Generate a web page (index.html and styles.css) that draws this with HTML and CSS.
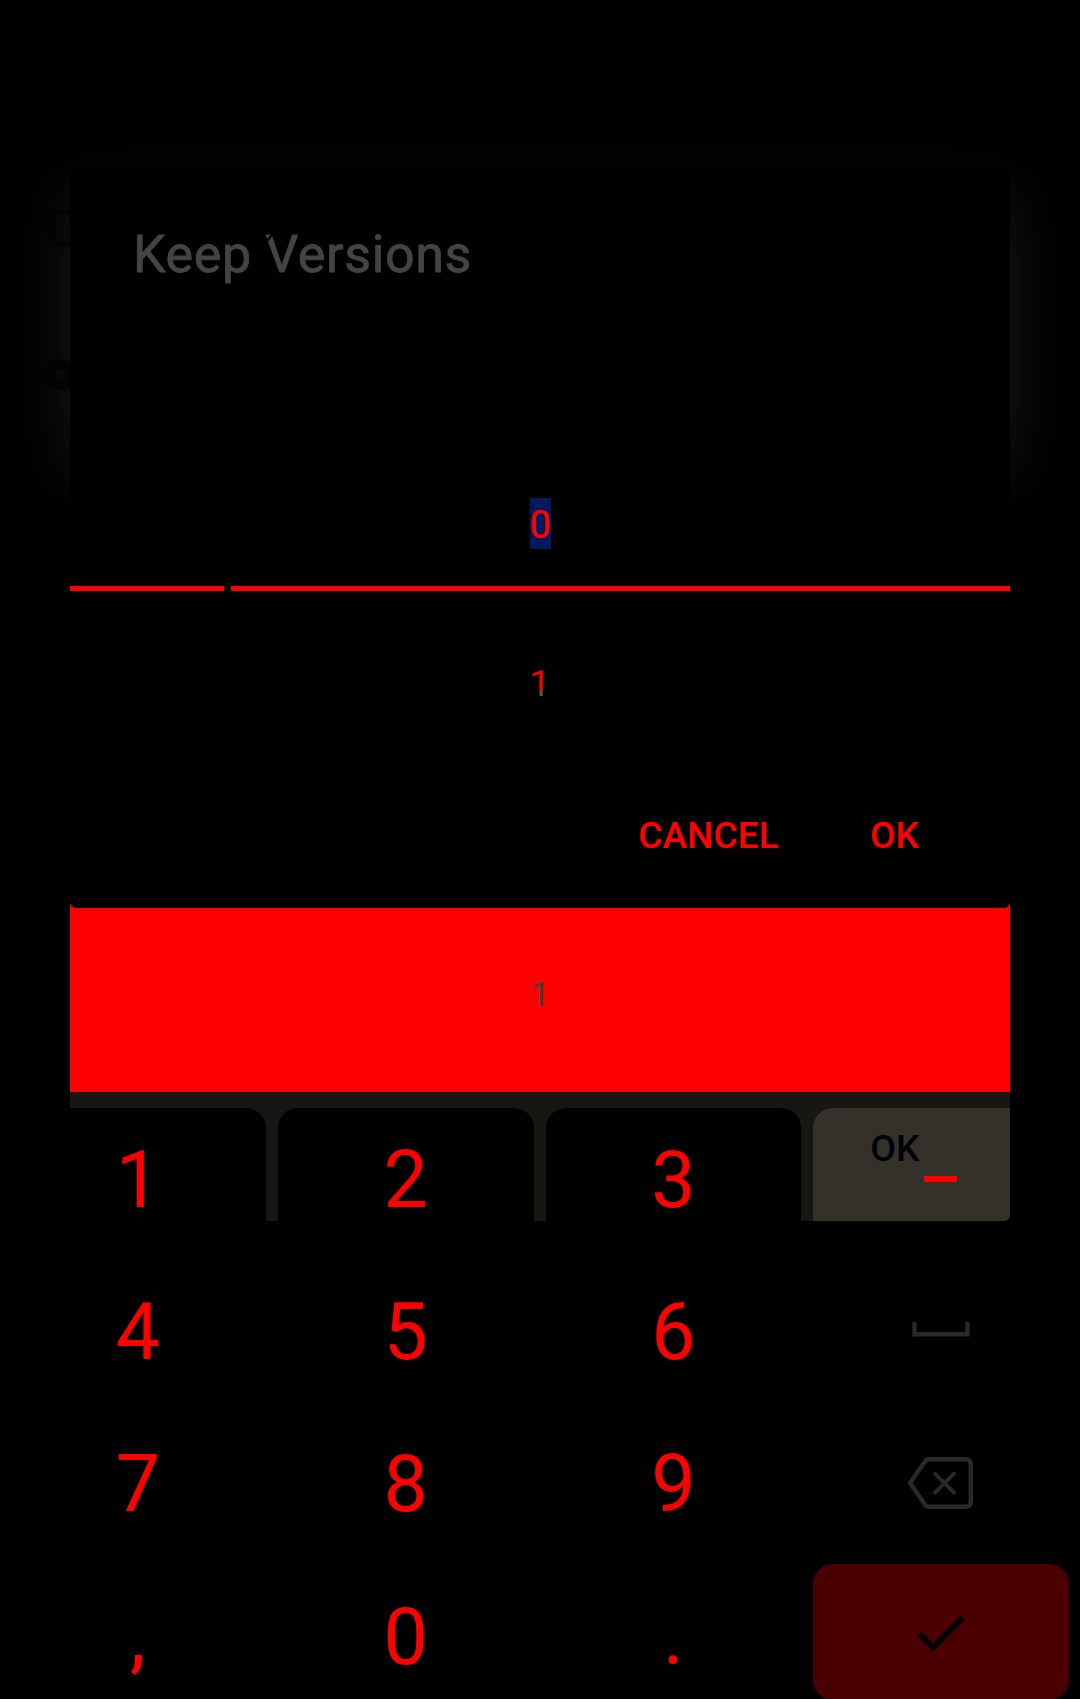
FILE: index.html
```html
<!DOCTYPE html>
<html lang="en">
<head>
<meta charset="utf-8">
<title>Keep Versions</title>
<link rel="stylesheet" href="styles.css">
</head>
<body>
<div class="screen">
  <div class="glow"></div>
  <svg class="backdrop-icons" width="25" height="200" viewBox="0 0 25 200" fill="none">
    <rect x="8" y="12" width="34" height="32" rx="3" stroke="#030303" stroke-width="5"/>
    <circle cx="15" cy="175" r="10.5" stroke="#030303" stroke-width="10"/>
  </svg>
  <main class="dialog">
    <h1 class="title">Keep Versions
      <svg class="title-nick" width="120" height="12" viewBox="0 0 120 12">
        <path d="M2.5 10 9.5 1M0 5l4 4" stroke="#000" stroke-width="2.2"/>
        <path d="M111 10l6-2v4h-6z" fill="#000"/>
      </svg>
    </h1>
    <div class="picker">
      <span class="value selected">0</span>
      <div class="line"><i class="line-left"></i><i class="line-right"></i></div>
      <span class="value next">1</span>
    </div>
    <div class="actions"><button class="action">CANCEL</button><button class="action">OK</button></div>
  </main>
  <div class="band"><span class="band-value">1</span></div>
  <section class="keypad">
    <div class="row row-first">
      <div class="key">1</div><div class="key">2</div><div class="key">3</div>
      <div class="key key-side"><span class="ghost">OK</span><i class="minus"></i></div>
    </div>
    <div class="row">
      <div class="key">4</div><div class="key">5</div><div class="key">6</div>
      <div class="key key-icon"><svg width="80" height="80" viewBox="0 0 80 80" fill="none" stroke="#292926" stroke-width="4.4" stroke-linecap="round"><path d="M13.5 35.8V46.3H66.5V35.8"/></svg></div>
    </div>
    <div class="row">
      <div class="key">7</div><div class="key">8</div><div class="key">9</div>
      <div class="key key-icon"><svg width="80" height="80" viewBox="0 0 80 80" fill="none" stroke="#292926" stroke-width="4.4" stroke-linecap="round" stroke-linejoin="round"><path d="M28 19.2H64.5Q69.8 19.2 69.8 24.5V61.5Q69.8 66.8 64.5 66.8H28Q25.5 66.8 24 64.5L9 43 24 21.5Q25.5 19.2 28 19.2Z"/><path d="M34 33.7l19 19M53 33.7l-19 19" stroke-width="3.8"/></svg></div>
    </div>
    <div class="row row-last">
      <div class="key">,</div><div class="key">0</div><div class="key">.</div>
      <div class="key key-icon key-enter"><svg width="80" height="80" viewBox="0 0 80 80" fill="none" stroke="#000" stroke-width="5.8"><path d="M18.4 41.8 32 55.4 61.8 25.6"/></svg></div>
    </div>
  </section>
</div>
</body>
</html>
```
FILE: styles.css
```css
* { box-sizing: border-box; }
body { margin: 0; background: #000; font-family: Roboto, sans-serif; }
.screen { position: relative; width: 1080px; height: 1699px; overflow: hidden; background: #000; color: #f00; }

/* faint halo around the dialog */
.glow { position: absolute; left: 70px; top: 192px; width: 940px; height: 280px; border-radius: 6px; box-shadow: 0 0 60px 3px #161616; }
.backdrop-icons { position: absolute; left: 45px; top: 200px; }

.dialog { position: relative; width: 940px; height: 740px; margin: 168px auto 0; background: #000; border-radius: 6px; display: flex; flex-direction: column; z-index: 1; }
.title { position: relative; margin: 56px 0 0 63px; height: 62px; line-height: 62px; font-size: 52px; font-weight: 400; letter-spacing: .6px; color: #444; -webkit-text-stroke: .8px #444; white-space: nowrap; }
.title-nick { position: absolute; left: 130px; top: 9px; }
.picker { display: flex; flex-direction: column; align-items: center; margin-top: 44px; padding-top: 168px; }
.value { font-size: 38px; line-height: 51px; width: 21px; text-align: center; }
.selected { height: 51px; line-height: 55px; background: #001a60; -webkit-text-stroke: .5px #f00; }
.line { display: flex; gap: 7px; width: 100%; height: 5px; margin-top: 37px; }
.line-left { width: 154px; background: #f00; }
.line-right { flex: 1; background: #f00; }
.next { margin-top: 67px; font-size: 36.5px; background: linear-gradient(#f00 32px, #555 32px); -webkit-background-clip: text; background-clip: text; color: transparent; }
.actions { display: flex; justify-content: flex-end; gap: 91px; margin-top: 101px; padding-right: 91px; }
.action { border: 0; padding: 0; background: none; color: #f00; font: 500 37.2px/50px Roboto, sans-serif; }

.band { height: 188px; margin: -4px 70px 0; padding-top: 66px; background: #f00; text-align: center; }
.band-value { font-size: 33px; line-height: 50px; color: #404040; }

.row { display: grid; grid-template-columns: repeat(4, 1fr); gap: 12px; padding: 16px 11px 0 10px; height: 152px; }
.row-first { background: #171612; clip-path: inset(0 70px 23px 70px round 0 0 6px 6px); }
.key { height: 136px; border-radius: 20px; background: #000; font-size: 79px; line-height: 144px; text-align: center; }
.row-last .key { line-height: 146px; }
.key-icon, .key-side { display: flex; align-items: center; justify-content: center; }
.key-side { position: relative; background: #34312b; }
.ghost { position: absolute; left: 57px; top: 15px; font-size: 37.5px; font-weight: 500; line-height: 50px; color: #00040a; }
.minus { width: 33px; height: 6px; margin: 6px 2px 0 0; background: #f00; }
.key-enter { background: #4a0000; }
```
